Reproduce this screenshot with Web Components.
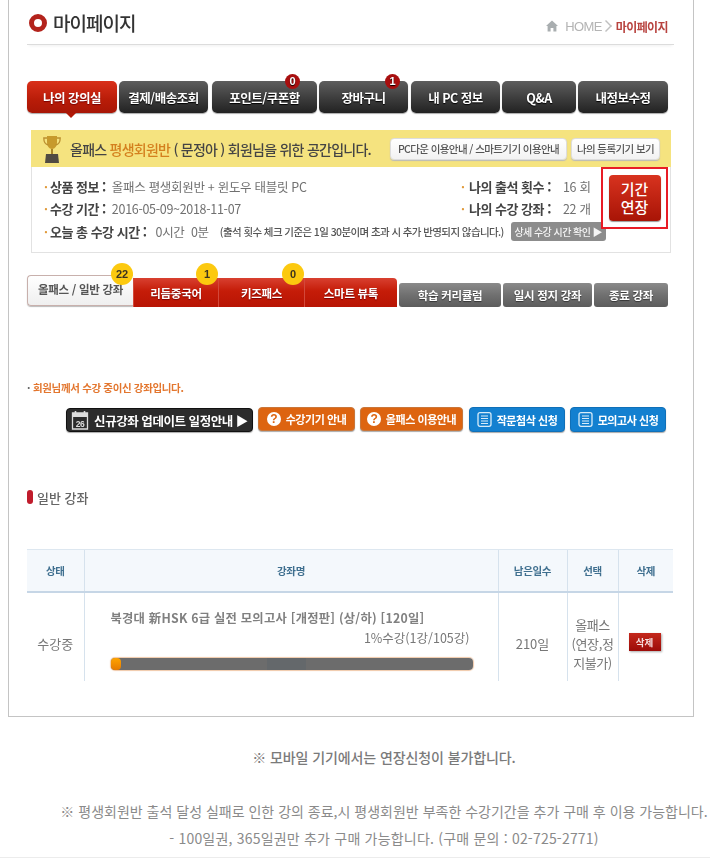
<!DOCTYPE html>
<html lang="ko">
<head>
<meta charset="utf-8">
<title>마이페이지</title>
<style>
  html, body { margin: 0; background: #fff; overflow: hidden; }
  body { font-family: "Noto Sans CJK KR", "Liberation Sans", sans-serif; color: #666; }
  .tabs-top { display: flex; gap: 2px; margin-top: 36px; }
  .tabs-sub { display: flex; align-items: flex-end; margin-top: 22px; height: 32px; }
  .actions { display: flex; justify-content: flex-end; align-items: flex-start; gap: 5px; margin-top: 13px; padding-right: 8px; height: 25px; }
</style>
</head>
<body>
<page-frame>
  <page-title>마이페이지</page-title>
  <div class="tabs-top">
    <tab-item active style="width:90px">나의 강의실</tab-item>
    <tab-item style="width:89px">결제/배송조회</tab-item>
    <tab-item badge="0" style="width:105px;margin-left:2px;--badge-x:73px">포인트/쿠폰함</tab-item>
    <tab-item badge="1" style="width:89px;--badge-x:66px">장바구니</tab-item>
    <tab-item style="width:89px;margin-left:1px">내 PC 정보</tab-item>
    <tab-item style="width:74px">Q&amp;A</tab-item>
    <tab-item style="width:90px">내정보수정</tab-item>
  </div>
  <info-panel></info-panel>
  <div class="tabs-sub">
    <sub-tab kind="white" badge="22" style="width:106px">올패스 / 일반 강좌</sub-tab>
    <sub-tab kind="red" badge="1" style="width:85px">리듬중국어</sub-tab>
    <sub-tab kind="red" badge="0" style="width:86px">키즈패스</sub-tab>
    <sub-tab kind="red" style="width:93px;border-top-right-radius:4px">스마트 뷰톡</sub-tab>
    <sub-tab kind="gray" style="width:102px;margin-left:2px">학습 커리큘럼</sub-tab>
    <sub-tab kind="gray" style="width:89px;margin-left:2px">일시 정지 강좌</sub-tab>
    <sub-tab kind="gray" style="width:74px;margin-left:2px">종료 강좌</sub-tab>
  </div>
  <notice-line>회원님께서 수강 중이신 강좌입니다.</notice-line>
  <div class="actions">
    <action-button kind="dark" icon="calendar" style="width:187px;margin-top:1px">신규강좌 업데이트 일정안내 ▶</action-button>
    <action-button kind="orange" icon="help" style="width:97px">수강기기 안내</action-button>
    <action-button kind="orange" icon="help" style="width:103px">올패스 이용안내</action-button>
    <action-button kind="blue" icon="doc" style="width:96px;margin-left:1px">작문첨삭 신청</action-button>
    <action-button kind="blue" icon="doc" style="width:96px">모의고사 신청</action-button>
  </div>
  <section-head>일반 강좌</section-head>
  <course-table></course-table>
</page-frame>
<page-notes></page-notes>

<script>
const imageBlur = 'blur(0.35px)';

class PageFrame extends HTMLElement {
  constructor() {
    super();
    this.attachShadow({ mode: 'open' }).innerHTML = `
      <style>
        :host {
          display: block;
          box-sizing: border-box;
          width: 686px;
          height: 717px;
          margin-left: 8px;
          padding: 0 19px 0 18px;
          border: 1px solid #c4c4c4;
          border-top: 0;
          filter: ${imageBlur};
        }
      </style>
      <slot></slot>`;
  }
}

class PageTitle extends HTMLElement {
  constructor() {
    super();
    this.attachShadow({ mode: 'open' }).innerHTML = `
      <style>
        :host {
          display: flex;
          align-items: center;
          box-sizing: border-box;
          height: 45px;
          padding: 1px 6px 0 2px;
          border-bottom: 1px solid #dcdcdc;
          box-shadow: 0 3px 3px -2px #f0f0f0;
        }
        .ring { box-sizing: border-box; width: 18px; height: 18px; border: 5px solid #b3231c; border-radius: 50%; margin-right: 6px; }
        .name { font-size: 19px; letter-spacing: -1px; color: #333; font-weight: 500; }
        .crumb { margin-left: auto; display: flex; align-items: center; font-size: 12px; color: #b4b4b4; margin-top: 7px; }
        .crumb svg { margin-right: 7px; }
        .home { font-family: "Liberation Sans", sans-serif; font-size: 13px; letter-spacing: -.6px; }
        .cur { color: #b8433f; font-weight: 700; letter-spacing: -.6px; }
        .arrow { width: 5px; height: 5px; margin: 0 7px 0 1px; border-top: 1px solid #c0c0c0; border-right: 1px solid #c0c0c0; transform: rotate(45deg) scale(1.4); }
      </style>
      <span class="ring"></span>
      <span class="name"><slot></slot></span>
      <span class="crumb">
        <svg width="12" height="12" viewBox="0 0 12 12"><path d="M6 .5 0 6h1.6v5.5h3V8h2.8v3.5h3V6H12z" fill="#a9aeb0"/></svg>
        <span class="home">HOME</span><span class="arrow"></span><span class="cur">마이페이지</span>
      </span>`;
  }
}

class TabItem extends HTMLElement {
  constructor() {
    super();
    this.attachShadow({ mode: 'open' }).innerHTML = `
      <style>
        :host {
          display: flex;
          position: relative;
          flex: none;
          align-items: center;
          justify-content: center;
          box-sizing: border-box;
          height: 32px;
          border-radius: 5px;
          background: linear-gradient(#5e5e5e, #3c3c3c 55%, #222);
          box-shadow: 0 1px 1px #aaa;
          color: #fff;
          font-size: 12.5px;
          font-weight: 700;
          letter-spacing: -.5px;
          text-shadow: 0 1px 1px #000;
        }
        :host([active]) { background: linear-gradient(#d9301a, #b81c08 60%, #a81606); text-shadow: 0 1px 1px #700; }
        :host([active])::after {
          content: ""; position: absolute; left: 39px; top: 32px;
          border: 5px solid transparent; border-top-color: #b01806; border-bottom: 0;
        }
        .badge {
          position: absolute; left: var(--badge-x, 0); top: -7px;
          width: 15px; height: 15px; border-radius: 50%;
          background: #a80f0f; color: #fff;
          font: 700 11px/15px "Liberation Sans", sans-serif; text-align: center; letter-spacing: 0;
        }
      </style>
      <slot></slot>`;
  }
  connectedCallback() {
    if (this.hasAttribute('badge')) {
      const badge = document.createElement('span');
      badge.className = 'badge';
      badge.textContent = this.getAttribute('badge');
      this.shadowRoot.append(badge);
    }
  }
}

class InfoPanel extends HTMLElement {
  constructor() {
    super();
    this.attachShadow({ mode: 'open' }).innerHTML = `
      <style>
        :host {
          display: block;
          position: relative;
          box-sizing: border-box;
          width: 640px;
          height: 123px;
          margin: 17px 0 0 4px;
          border: 1px solid #e2e2e2;
          border-top: 0;
          color: #666;
          font-size: 12.5px;
          letter-spacing: -.3px;
        }
        .head {
          display: flex; align-items: center; height: 37px; margin: 0 -1px;
          padding: 0 11px 0 12px; background: #f5e37f;
        }
        .head svg { flex: none; margin-right: 9px; }
        .greet { flex: none; white-space: nowrap; font-size: 14px; font-weight: 500; letter-spacing: -.75px; color: #444; }
        .greet b { color: #d4801e; font-weight: 500; }
        .pill {
          display: flex; flex: none; align-items: center; justify-content: center; box-sizing: border-box;
          height: 22px; border-radius: 4px; background: linear-gradient(#fff, #f2f2f2);
          border: 1px solid #ddd; box-shadow: 0 1px 1px #bbb; white-space: nowrap;
          font-size: 10.5px; letter-spacing: -.6px; color: #555; font-weight: 500;
        }
        .rows { padding: 8px 0 0 12px; }
        .row { display: flex; align-items: center; height: 22px; white-space: nowrap; }
        .cell { display: flex; align-items: center; }
        .cell.left { width: 417px; }
        .dot { color: #e09a3a; width: 6px; font-size: 12px; font-weight: 700; }
        .cell:not(.left) .dot { width: 8px; }
        .label { font-weight: 700; font-size: 13px; color: #444; letter-spacing: -.5px; }
        .value { color: #707070; }
        .fine { font-size: 10.5px; letter-spacing: -.6px; color: #555; margin-left: 11px; font-weight: 500; }
        .more {
          display: flex; align-items: center; justify-content: center; box-sizing: border-box;
          width: 95px; height: 19px; margin-left: 7px; border-radius: 3px;
          background: #8c8c8c; color: #f4f4f4; font-size: 10px; font-weight: 500; letter-spacing: -.55px;
        }
        .extend {
          position: absolute; left: 569px; top: 37px; box-sizing: border-box;
          width: 67px; height: 62px; border: 2px solid #e81c26; background: #fff;
          display: flex; align-items: center; justify-content: center;
        }
        .extend span {
          display: flex; align-items: center; justify-content: center; text-align: center;
          width: 52px; height: 46px; border-radius: 4px;
          background: linear-gradient(#d8331f, #a81406); box-shadow: 0 1px 1px #999;
          color: #fff; font-size: 15px; line-height: 18px; font-weight: 500; letter-spacing: 0;
        }
      </style>
      <div class="head">
        <svg width="18" height="28" viewBox="0 0 18 28">
          <path d="M4 1h10v6c0 4-2 7-5 7S4 11 4 7z" fill="#c79a2c"/>
          <path d="M4 3H.8c0 4 1.500 6.500 4.600 7M14 3h3.200c0 4-1.500 6.500-4.600 7" fill="none" stroke="#bb9030" stroke-width="1.300"/>
          <path d="M8 14h2v5H8z" fill="#a88428"/>
          <path d="M3 19h12l1 9H2z" fill="#514b42"/>
        </svg>
        <span class="greet">올패스 <b>평생회원반</b> ( 문정아 ) 회원님을 위한 공간입니다.</span>
        <span class="pill" style="width:177px;margin-left:auto">PC다운 이용안내 / 스마트기기 이용안내</span>
        <span class="pill" style="width:89px;margin-left:4px">나의 등록기기 보기</span>
      </div>
      <div class="rows">
        <div class="row">
          <span class="cell left"><span class="dot">·</span><span class="label">상품 정보 :</span><span class="value" style="margin-left:6px">올패스 평생회원반 + 윈도우 태블릿 PC</span></span>
          <span class="cell"><span class="dot">·</span><span class="label">나의 출석 횟수 :</span><span class="value" style="margin-left:12px">16 회</span></span>
        </div>
        <div class="row">
          <span class="cell left"><span class="dot">·</span><span class="label">수강 기간 :</span><span class="value" style="margin-left:6px">2016-05-09~2018-11-07</span></span>
          <span class="cell"><span class="dot">·</span><span class="label">나의 수강 강좌 :</span><span class="value" style="margin-left:12px">22 개</span></span>
        </div>
        <div class="row" style="margin-top:1px">
          <span class="dot">·</span><span class="label">오늘 총 수강 시간 :</span>
          <span class="value" style="margin-left:9px">0시간&nbsp; 0분</span>
          <span class="fine">(출석 횟수 체크 기준은 1일 30분이며 초과 시 추가 반영되지 않습니다.)</span>
          <span class="more">상세 수강 시간 확인 ▶</span>
        </div>
      </div>
      <div class="extend"><span>기간<br>연장</span></div>`;
  }
}

class SubTab extends HTMLElement {
  constructor() {
    super();
    this.attachShadow({ mode: 'open' }).innerHTML = `
      <style>
        :host {
          display: flex;
          position: relative;
          flex: none;
          align-items: center;
          justify-content: center;
          box-sizing: border-box;
          font-size: 11.5px;
          font-weight: 700;
          letter-spacing: -.3px;
          white-space: nowrap;
        }
        :host([kind="white"]) {
          height: 31px; margin-bottom: 1px; border: 1px solid #c8b0ac; border-right: 0; border-radius: 4px 0 0 4px;
          background: linear-gradient(#fff, #efefef); color: #555; box-shadow: 0 1px 1px #bbb; padding-bottom: 3px;
        }
        :host([kind="red"]) {
          height: 29px; background: linear-gradient(#d84030, #c51c08 45%, #b81404); color: #fff;
          border-left: 1px solid #d3483a; text-shadow: 0 1px 1px #700;
        }
        :host([kind="gray"]) {
          height: 24px; border-radius: 3px; background: linear-gradient(#8a8a8a, #707070 50%, #5c5c5c);
          color: #fff; text-shadow: 0 1px 1px #333;
        }
        .badge {
          position: absolute; right: 0; top: -15px; width: 22px; height: 22px; border-radius: 50%;
          background: #fcc90f; color: #3c3420; text-shadow: none;
          font: 700 11px/22px "Liberation Sans", sans-serif; text-align: center; letter-spacing: 0;
        }
        :host([kind="white"]) .badge { top: -13px; }
      </style>
      <slot></slot>`;
  }
  connectedCallback() {
    if (this.hasAttribute('badge')) {
      const badge = document.createElement('span');
      badge.className = 'badge';
      badge.textContent = this.getAttribute('badge');
      this.shadowRoot.append(badge);
    }
  }
}

class NoticeLine extends HTMLElement {
  constructor() {
    super();
    this.attachShadow({ mode: 'open' }).innerHTML = `
      <style>
        :host { display: flex; align-items: center; height: 14px; margin-top: 73px; font-size: 10.5px; font-weight: 700; color: #e3762e; letter-spacing: -.35px; }
        i { font-style: normal; color: #666; width: 6px; }
      </style>
      <i>·</i><slot></slot>`;
  }
}

const actionIcons = {
  calendar: `<svg width="18" height="20" viewBox="0 0 18 20"><path d="M1.500 3h15v16h-15z" fill="none" stroke="#ddd" stroke-width="1.300"/><path d="M1 3h16v4H1z" fill="#ddd"/><path d="M4.500 1v3M13.500 1v3" stroke="#ddd" stroke-width="1.600"/><text x="9" y="16.500" text-anchor="middle" font-size="8.500" font-family="Liberation Sans" fill="#ddd" font-weight="700">26</text></svg>`,
  help: `<span class="help">?</span>`,
  doc: `<svg width="15" height="15" viewBox="0 0 15 15"><rect x="1" y=".7" width="13" height="13.600" rx="2" fill="none" stroke="#d8ebf8" stroke-width="1.300"/><path d="M4 4h7M4 6.500h7M4 9h7M4 11.500h7" stroke="#d8ebf8"/></svg>`
};

class ActionButton extends HTMLElement {
  constructor() {
    super();
    this.attachShadow({ mode: 'open' }).innerHTML = `
      <style>
        :host {
          display: flex;
          flex: none;
          align-items: center;
          justify-content: center;
          gap: 5px;
          box-sizing: border-box;
          height: 24px;
          border-radius: 4px;
          color: #fff;
          font-size: 11px;
          font-weight: 700;
          letter-spacing: -.45px;
          white-space: nowrap;
          box-shadow: 0 1px 1px #aaa;
        }
        :host([kind="dark"]) { background: #2c2c2c; font-size: 12.500px; border: 1px solid #111; }
        :host([kind="orange"]) { background: #dd6410; border: 1px solid #c9763a; }
        :host([kind="blue"]) { background: #1380d0; border: 1px solid #1070b8; height: 25px; }
        .help {
          display: block; width: 14px; height: 14px; border-radius: 50%; background: #fff; color: #dd6410;
          font: 700 12px/14px "Liberation Sans", sans-serif; text-align: center;
        }
        svg { display: block; }
      </style>
      <span id="icon"></span><slot></slot>`;
  }
  connectedCallback() {
    this.shadowRoot.getElementById('icon').innerHTML = actionIcons[this.getAttribute('icon')] || '';
  }
}

class SectionHead extends HTMLElement {
  constructor() {
    super();
    this.attachShadow({ mode: 'open' }).innerHTML = `
      <style>
        :host { display: flex; align-items: center; height: 18px; margin-top: 56px; font-size: 13px; font-weight: 500; color: #666; }
        i { width: 6px; height: 14px; border-radius: 3px; background: #c01c2c; margin-right: 4px; }
      </style>
      <i></i><slot></slot>`;
  }
}

class CourseTable extends HTMLElement {
  constructor() {
    super();
    this.attachShadow({ mode: 'open' }).innerHTML = `
      <style>
        :host { display: block; height: 132px; margin-top: 43px; overflow: hidden; color: #777; font-size: 13px; }
        table { width: 646px; border-collapse: collapse; table-layout: fixed; }
        th {
          height: 41px; padding: 0; background: #f4f8fc; color: #3f6f8f;
          font-size: 10.5px; font-weight: 700; letter-spacing: -.3px;
          border-top: 1px solid #dde7f0; border-bottom: 2px solid #c6d6e6;
        }
        td { height: 102px; padding: 0; text-align: center; vertical-align: top; }
        td.mid { padding-top: 41px; line-height: 19px; }
        th + th, td + td { border-left: 1px solid #d6e2ed; }
        td.name { text-align: left; padding: 16px 25px 0 26px; }
        .title { font-size: 12.3px; line-height: 19px; font-weight: 700; letter-spacing: .02em; color: #808080; white-space: nowrap; }
        .pct { text-align: right; padding-right: 3px; line-height: 19px; font-size: 12.500px; }
        .bar {
          position: relative; height: 12px; margin-top: 11px; border-radius: 4px;
          background: linear-gradient(90deg, #6c6c6c 43%, #64686b 43%, #64686b 54%, #6c6c6c 54%);
          box-shadow: 0 0 1px 1px #f0c8a8;
        }
        .bar i { position: absolute; left: 0; top: 0; width: 10px; height: 12px; border-radius: 4px; background: linear-gradient(#ffa400, #e67a00); }
        .sel { line-height: 19px; padding-top: 22px; letter-spacing: -.4px; white-space: nowrap; }
        .del {
          display: block; width: 32px; height: 18px; margin: 40px 0 0 10px; background: linear-gradient(#c4281c, #9c0c08);
          color: #f6e0e0; font-size: 9.500px; line-height: 18px; font-weight: 700; box-shadow: 1px 1px 2px #aaa;
        }
      </style>
      <table>
        <colgroup><col style="width:57px"><col style="width:414px"><col style="width:69px"><col style="width:51px"><col style="width:55px"></colgroup>
        <thead><tr><th>상태</th><th>강좌명</th><th>남은일수</th><th>선택</th><th>삭제</th></tr></thead>
        <tbody>
          <tr>
            <td class="mid">수강중</td>
            <td class="name">
              <div class="title">북경대 新HSK 6급 실전 모의고사 [개정판] (상/하) [120일]</div>
              <div class="pct">1%수강(1강/105강)</div>
              <div class="bar"><i></i></div>
            </td>
            <td class="mid">210일</td>
            <td class="sel">올패스<br>(연장,정<br>지불가)</td>
            <td><span class="del">삭제</span></td>
          </tr>
        </tbody>
      </table>`;
  }
}

class PageNotes extends HTMLElement {
  constructor() {
    super();
    this.attachShadow({ mode: 'open' }).innerHTML = `
      <style>
        :host {
          display: block;
          box-sizing: border-box;
          height: 141px;
          padding: 27px 0 0 58px;
          border-bottom: 1px solid #ececec;
          text-align: center;
          white-space: nowrap;
          color: #8a8a8a;
          font-size: 14px;
        }
        .strong { font-size: 14px; font-weight: 500; color: #7a7a7a; line-height: 26px; margin-bottom: 28px; letter-spacing: -.1px; }
        .last { letter-spacing: .2px; }
        p { margin: 0; line-height: 27px; }
      </style>
      <p class="strong">※ 모바일 기기에서는 연장신청이 불가합니다.</p>
      <p>※ 평생회원반 출석 달성 실패로 인한 강의 종료,시 평생회원반 부족한 수강기간을 추가 구매 후 이용 가능합니다.</p>
      <p class="last">- 100일권, 365일권만 추가 구매 가능합니다. (구매 문의 : 02-725-2771)</p>`;
  }
}

customElements.define('page-frame', PageFrame);
customElements.define('page-title', PageTitle);
customElements.define('tab-item', TabItem);
customElements.define('info-panel', InfoPanel);
customElements.define('sub-tab', SubTab);
customElements.define('notice-line', NoticeLine);
customElements.define('action-button', ActionButton);
customElements.define('section-head', SectionHead);
customElements.define('course-table', CourseTable);
customElements.define('page-notes', PageNotes);
</script>
</body>
</html>
